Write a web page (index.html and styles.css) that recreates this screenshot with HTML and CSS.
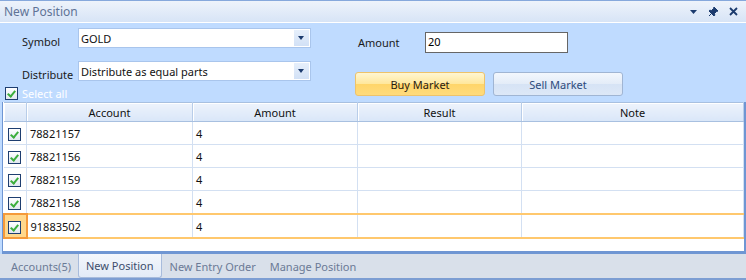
FILE: index.html
```html
<!DOCTYPE html>
<html lang="en">
<head>
    <meta charset="UTF-8">
    <title>New Position</title>
    <link rel="stylesheet" href="styles.css">
</head>
<body>
    <div class="window">
        <!-- Titulo -->
        <div class="titlebar">
            <span class="title">New Position</span>
            <div class="title-icons">
                <svg width="9" height="9" viewBox="0 0 9 9"><path d="M1 3h7L4.5 7z" fill="#1c3b6e"/></svg>
                <svg width="11" height="11" viewBox="0 0 11 11"><path d="M6 1l4 4-1.5.5-2 2 .3 1.7L6 10 1 5l.8-.8 1.7.3 2-2z M3.3 7.7L1 10" fill="#1c3b6e" stroke="#1c3b6e" stroke-width="1"/></svg>
                <svg width="9" height="9" viewBox="0 0 9 9"><path d="M1 1l7 7M8 1L1 8" stroke="#1c3b6e" stroke-width="1.8"/></svg>
            </div>
        </div>

        <!-- Formulario -->
        <div class="panel">
            <div class="form-left">
                <div class="field">
                    <label class="lbl">Symbol</label>
                    <div class="combo"><span>GOLD</span><i class="drop"></i></div>
                </div>
                <div class="field">
                    <label class="lbl">Distribute</label>
                    <div class="combo"><span>Distribute as equal parts</span><i class="drop"></i></div>
                </div>
                <div class="select-all">
                    <span class="chk"></span>
                    <span>Select all</span>
                </div>
            </div>
            <div class="form-right">
                <div class="amount-field">
                    <label class="lbl">Amount</label>
                    <div class="amount-input">20</div>
                </div>
                <div class="buttons">
                    <button class="btn buy">Buy Market</button>
                    <button class="btn sell">Sell Market</button>
                </div>
            </div>
        </div>

        <!-- Tabela -->
        <div class="grid">
            <table>
                <tr class="head">
                    <th class="c0"></th>
                    <th class="c1">Account</th>
                    <th class="c2">Amount</th>
                    <th class="c3">Result</th>
                    <th>Note</th>
                </tr>
                <tr><td class="c0"><span class="chk"></span></td><td>78821157</td><td>4</td><td></td><td></td></tr>
                <tr><td class="c0"><span class="chk"></span></td><td>78821156</td><td>4</td><td></td><td></td></tr>
                <tr><td class="c0"><span class="chk"></span></td><td>78821159</td><td>4</td><td></td><td></td></tr>
                <tr><td class="c0"><span class="chk"></span></td><td>78821158</td><td>4</td><td></td><td></td></tr>
                <tr class="selected"><td class="c0"><span class="chk"></span></td><td>91883502</td><td>4</td><td></td><td></td></tr>
            </table>
        </div>

        <!-- Abas -->
        <div class="tabs">
            <span class="tab">Accounts(5)</span>
            <span class="tab active">New Position</span>
            <span class="tab">New Entry Order</span>
            <span class="tab">Manage Position</span>
        </div>
    </div>
</body>
</html>
```

FILE: styles.css
```css
body {
    margin: 0;
    font-family: "Noto Sans", "DejaVu Sans", sans-serif;
    font-size: 11px;
}

.window {
    width: 746px;
    height: 280px;
    background-color: #bfdbff;
    display: flex;
    flex-direction: column;
    overflow: hidden;
}

.titlebar {
    height: 21px;
    flex-shrink: 0;
    border-top: 1px solid #86a8dc;
    border-bottom: 1px solid #ffffff;
    background: linear-gradient(#eef3fb, #d7e4f6);
    display: flex;
    align-items: center;
    justify-content: space-between;
    padding: 0 8px 0 4px;
    font-size: 12px;
}

.title {
    color: #5f7396;
}

.title-icons {
    display: flex;
    align-items: center;
    gap: 10px;
}

.panel {
    height: 79px;
    flex-shrink: 0;
    display: flex;
}

.form-left {
    width: 320px;
    padding: 5px 0 0 5px;
    box-sizing: border-box;
}

.field {
    display: flex;
    align-items: flex-start;
    margin-left: 17px;
}

.field + .field {
    margin-top: 12px;
}

.lbl {
    width: 56px;
    color: #1a1a1a;
    line-height: 14px;
    padding-top: 7px;
}

.combo {
    width: 231px;
    height: 18px;
    background-color: white;
    border: 1px solid #a9c5ec;
    display: flex;
    justify-content: space-between;
    align-items: center;
}

.combo span {
    padding-left: 2px;
    color: #111;
}

.drop {
    width: 15px;
    height: 16px;
    margin-right: 1px;
    background: linear-gradient(#e6effb, #d2e1f6);
    position: relative;
}

.drop::after {
    content: "";
    position: absolute;
    left: 4px;
    top: 6px;
    border-left: 3px solid transparent;
    border-right: 3px solid transparent;
    border-top: 4px solid #1c3b6e;
}

.select-all {
    display: flex;
    align-items: center;
    gap: 4px;
    color: white;
    margin-top: 4px;
    height: 15px;
}

.form-right {
    padding: 9px 0 0 38px;
}

.amount-field {
    display: flex;
    align-items: center;
}

.amount-field .lbl {
    width: 67px;
    padding-top: 0;
}

.amount-input {
    width: 139px;
    height: 19px;
    background-color: white;
    border: 1px solid #666;
    padding-left: 2px;
    line-height: 18px;
}

.buttons {
    display: flex;
    gap: 8px;
    margin-top: 19px;
    margin-left: -3px;
}

.btn {
    width: 130px;
    height: 24px;
    border-radius: 3px;
    font-family: inherit;
    font-size: 11px;
    padding: 0;
}

.buy {
    background: linear-gradient(#fff6d2, #ffe79b 50%, #ffd56a 51%, #ffdb7c);
    border: 1px solid #eec36a;
    color: #2a1a10;
}

.sell {
    background: linear-gradient(#f3f7fd, #e3ecf8 50%, #d6e3f5 51%, #dde8f7);
    border: 1px solid #a0b5d3;
    color: #2e4b7c;
}

.chk {
    display: inline-block;
    width: 11px;
    height: 11px;
    border: 1px solid #1e3e70;
    background: linear-gradient(#ffffff, #e0e7f0);
    position: relative;
    vertical-align: middle;
    flex-shrink: 0;
}

.chk::after {
    content: "";
    position: absolute;
    left: 3px;
    top: 1px;
    width: 3px;
    height: 6px;
    border-right: 2px solid #3cae3c;
    border-bottom: 2px solid #3cae3c;
    transform: rotate(40deg);
}

.grid {
    flex: 1;
    margin-left: 2px;
    background-color: white;
    border-left: 1px solid #6f96d3;
    border-right: 2px solid #6f96d3;
    border-bottom: 3px solid #6f96d3;
}

table {
    width: 100%;
    border-collapse: collapse;
    table-layout: fixed;
}

th {
    height: 18px;
    font-weight: normal;
    color: #111;
    background: linear-gradient(#edf3fc, #d9e6f8);
    border-top: 1px solid #a8c0e0;
    border-right: 1px solid #b8cde9;
    border-bottom: 1px solid #a8c0e0;
    box-shadow: inset 1px 1px 0 white;
    padding: 0;
}

.c0 { width: 22px; }
.c1 { width: 165px; }
.c2 { width: 164px; }
.c3 { width: 163px; }

td {
    height: 22px;
    border-right: 1px solid #d3e0f2;
    border-bottom: 1px solid #d3e0f2;
    padding: 0 0 0 3px;
    color: #111;
}

td.c0 {
    padding: 0 0 0 4px;
}

.selected td {
    border-top: 2px solid #ffc86e;
    border-bottom: 2px solid #ffc86e;
}

.selected td.c0 {
    background-color: #ffd88c;
    border: 2px solid #f59a3a;
    padding-left: 3px;
}

.tabs {
    height: 24px;
    flex-shrink: 0;
    background-color: #d9e0ea;
    border-bottom: 2px solid #7d9ed3;
    display: flex;
    align-items: stretch;
    padding-left: 4px;
}

.tab {
    color: #6b7a96;
    padding: 0 7px;
    display: flex;
    align-items: center;
}

.tab.active {
    color: #3d4d6c;
    background: linear-gradient(#f4f7fc, #e3ebf7);
    border: 1px solid #a8bcdc;
    border-top: none;
    border-radius: 0 0 3px 3px;
    margin-right: 1px;
}
```
